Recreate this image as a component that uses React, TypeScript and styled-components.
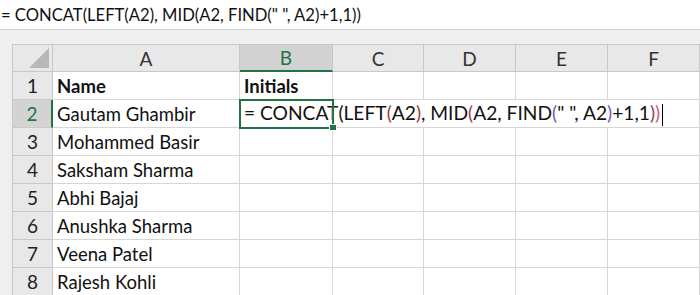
import * as React from 'react'
import styled, { createGlobalStyle } from 'styled-components'

const GlobalStyle = createGlobalStyle`
  html, body {
    margin: 0;
    padding: 0;
    background: #efefef;
    overflow: hidden;
  }
`

const GRID = '#d6d6d6'
const HEAD_LINE = '#c8c8c8'
const GREEN = '#217346'

const Style = {
  Frame: styled.div`
    width: 700px;
    height: 295px;
    overflow: hidden;
    background: #efefef;
    font-family: Lato, 'Liberation Sans', sans-serif;
    color: #111;
  `,
  FormulaBar: styled.div`
    height: 30px;
    box-sizing: border-box;
    background: #fff;
    border-bottom: 1px solid #d0d0d0;
    font-size: 16.6px;
    line-height: 30px;
    white-space: nowrap;
    padding-left: 1px;
  `,
  SheetArea: styled.div`
    padding: 14px 0 0 12px;
  `,
  Sheet: styled.div`
    display: grid;
    grid-template-columns: 40px 187px 93px 91px 92px 92px 92px;
    grid-template-rows: 27px repeat(8, 28px);
    background: #fff;
    border-left: 1px solid ${HEAD_LINE};
    border-top: 1px solid ${HEAD_LINE};
  `,
  Corner: styled.div`
    background: #e8e8e8;
    border-right: 1px solid ${HEAD_LINE};
    border-bottom: 1px solid ${HEAD_LINE};
    display: flex;
    align-items: flex-end;
    justify-content: flex-end;
    padding: 0 3px 3px 0;
  `,
  ColHead: styled.div<{ $active?: boolean }>`
    background: ${(p) => (p.$active ? '#d3d3d3' : '#e8e8e8')};
    color: ${(p) => (p.$active ? GREEN : '#333')};
    border-right: 1px solid ${HEAD_LINE};
    border-bottom: ${(p) => (p.$active ? `2px solid ${GREEN}` : `1px solid ${HEAD_LINE}`)};
    display: flex;
    align-items: center;
    justify-content: center;
    font-size: 19px;
  `,
  RowHead: styled.div<{ $active?: boolean }>`
    background: ${(p) => (p.$active ? '#d3d3d3' : '#e8e8e8')};
    color: ${(p) => (p.$active ? GREEN : '#222')};
    border-right: ${(p) => (p.$active ? `2px solid ${GREEN}` : `1px solid ${HEAD_LINE}`)};
    border-bottom: 1px solid ${HEAD_LINE};
    display: flex;
    align-items: center;
    justify-content: center;
    font-size: 19px;
  `,
  Cell: styled.div<{ $bold?: boolean; $open?: boolean }>`
    border-right: ${(p) => (p.$open ? 'none' : `1px solid ${GRID}`)};
    border-bottom: 1px solid ${GRID};
    display: flex;
    align-items: center;
    padding-left: 4px;
    font-size: 18.5px;
    font-weight: ${(p) => (p.$bold ? 700 : 400)};
    white-space: nowrap;
    min-width: 0;
  `,
  ActiveCell: styled.div`
    position: relative;
    border-bottom: 1px solid ${GRID};
    outline: 2px solid ${GREEN};
    outline-offset: -1px;
    display: flex;
    align-items: center;
    padding-left: 4px;
    font-size: 19.2px;
    white-space: nowrap;
    min-width: 0;
    z-index: 1;
  `,
  FillHandle: styled.span`
    position: absolute;
    right: -4px;
    bottom: -4px;
    width: 6px;
    height: 5px;
    background: ${GREEN};
    border: 1px solid #fff;
  `,
  Caret: styled.span`
    display: inline-block;
    width: 1px;
    height: 22px;
    background: #000;
    margin-left: 2px;
    vertical-align: middle;
  `,
  Paren: styled.span<{ $tone: 'red' | 'purple' | 'pink' }>`
    color: ${(p) => (p.$tone === 'red' ? '#a03a44' : p.$tone === 'purple' ? '#7358a8' : '#c0607e')};
  `,
}

const names = [
  'Gautam Ghambir',
  'Mohammed Basir',
  'Saksham Sharma',
  'Abhi Bajaj',
  'Anushka Sharma',
  'Veena Patel',
  'Rajesh Kohli',
]

const columns = ['A', 'B', 'C', 'D', 'E', 'F']

const Formula = ({ colored }: { colored?: boolean }) => {
  if (!colored) return <>= CONCAT(LEFT(A2), MID(A2, FIND(" ", A2)+1,1))</>
  return (
    <>
      = CONCAT(LEFT<Style.Paren $tone="red">(</Style.Paren>A2<Style.Paren $tone="red">)</Style.Paren>, MID
      <Style.Paren $tone="red">(</Style.Paren>A2, FIND<Style.Paren $tone="purple">(</Style.Paren>" ", A2
      <Style.Paren $tone="purple">)</Style.Paren>+1,1<Style.Paren $tone="red">)</Style.Paren>
      <Style.Paren $tone="pink">)</Style.Paren>
    </>
  )
}

const Corner = () => (
  <Style.Corner>
    <svg width="20" height="20" viewBox="0 0 20 20">
      <polygon points="20,0 20,20 0,20" fill="#b8b8b8" />
    </svg>
  </Style.Corner>
)

const App = () => {
  return (
    <Style.Frame>
      <GlobalStyle />
      <Style.FormulaBar>
        <Formula />
      </Style.FormulaBar>
      <Style.SheetArea>
        <Style.Sheet>
          <Corner />
          {columns.map((c) => (
            <Style.ColHead key={c} $active={c === 'B'}>
              {c}
            </Style.ColHead>
          ))}

          <Style.RowHead>1</Style.RowHead>
          <Style.Cell $bold>Name</Style.Cell>
          <Style.Cell $bold>Initials</Style.Cell>
          {columns.slice(2).map((c) => (
            <Style.Cell key={`1-${c}`} />
          ))}

          <Style.RowHead $active>2</Style.RowHead>
          <Style.Cell>{names[0]}</Style.Cell>
          <Style.ActiveCell>
            <span>
              <Formula colored />
              <Style.Caret />
            </span>
            <Style.FillHandle />
          </Style.ActiveCell>
          {columns.slice(2).map((c) => (
            <Style.Cell key={`2-${c}`} $open={c !== 'F'} />
          ))}

          {names.slice(1).map((name, i) => (
            <React.Fragment key={name}>
              <Style.RowHead>{i + 3}</Style.RowHead>
              <Style.Cell>{name}</Style.Cell>
              {columns.slice(1).map((c) => (
                <Style.Cell key={`${i}-${c}`} />
              ))}
            </React.Fragment>
          ))}
        </Style.Sheet>
      </Style.SheetArea>
    </Style.Frame>
  )
}

export default App
